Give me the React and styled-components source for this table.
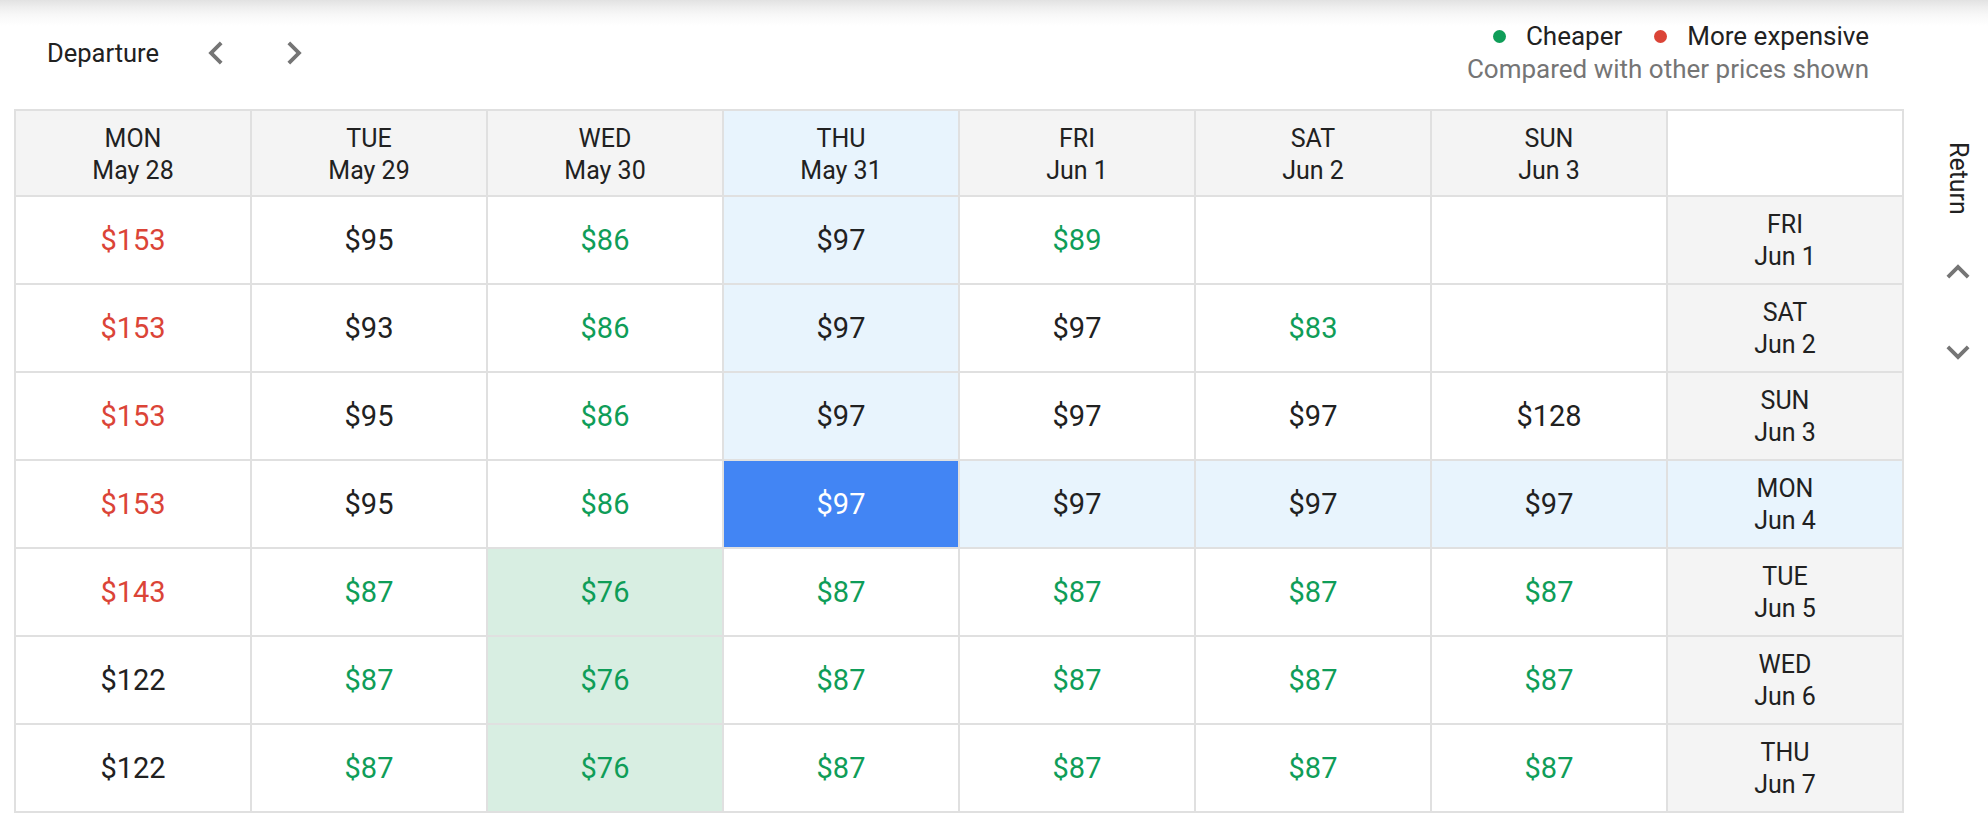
import React from 'react';
import styled, { createGlobalStyle } from 'styled-components';

const GlobalStyle = createGlobalStyle`
  html, body { margin: 0; padding: 0; background: #fff; }
  body {
    font-family: Roboto, "Liberation Sans", Arial, sans-serif;
    color: #212121;
  }
`;

const BG = {
  white: '#ffffff',
  header: '#f4f4f4',
  hl: '#e8f4fd',
  cheap: '#d8eee2',
  selected: '#4285f4',
};

const TONE = {
  r: '#db4437',
  g: '#0f9d58',
  k: '#212121',
  w: '#ffffff',
};

const Page = styled.div`
  width: 1988px;
  height: 826px;
  box-sizing: border-box;
  padding-left: 14px;
  overflow: hidden;
  background: linear-gradient(to bottom, #e2e2e2 0px, #eeeeee 7px, #f8f8f8 15px, #ffffff 26px);
`;

const TopBar = styled.div`
  height: 109px;
  box-sizing: border-box;
  padding: 0 119px 4px 33px;
  display: flex;
  align-items: center;
  justify-content: space-between;
`;

const NavGroup = styled.div`
  display: flex;
  align-items: center;
`;

const Title = styled.span`
  font-size: 25.5px;
  color: #212121;
  margin-right: 33px;
`;

const IconButton = styled.button`
  width: 48px;
  height: 48px;
  padding: 0;
  border: none;
  background: transparent;
  display: flex;
  align-items: center;
  justify-content: center;
  color: #757575;
  cursor: pointer;
  margin-right: ${(p) => p.$gap || 0}px;
`;

const Legend = styled.div`
  display: flex;
  flex-direction: column;
  align-items: flex-end;
  font-size: 26px;
  line-height: 33px;
`;

const LegendRow = styled.div`
  display: flex;
  align-items: center;
  gap: 32px;
`;

const LegendItem = styled.div`
  display: flex;
  align-items: center;
  color: #212121;
`;

const Dot = styled.span`
  width: 13px;
  height: 13px;
  border-radius: 50%;
  background: ${(p) => p.$color};
  margin-right: 20px;
`;

const Note = styled.div`
  color: #757575;
`;

const Main = styled.div`
  display: flex;
  align-items: flex-start;
`;

const Grid = styled.div`
  display: grid;
  grid-template-columns: repeat(8, 234px);
  grid-template-rows: 84px repeat(7, 86px);
  gap: 2px;
  border: 2px solid #e0e0e0;
  background: #e0e0e0;
`;

const Cell = styled.div`
  display: flex;
  flex-direction: column;
  align-items: center;
  justify-content: center;
  text-align: center;
  box-sizing: border-box;
  background: ${(p) => BG[p.$bg] || BG.white};
`;

const DateCell = styled(Cell)`
  font-size: 25px;
  line-height: 32px;
  color: #212121;
  padding-top: ${(p) => p.$pad || 1}px;
`;

const PriceCell = styled(Cell)`
  font-size: 29px;
  color: ${(p) => TONE[p.$tone] || TONE.k};
`;

const SideNav = styled.div`
  width: 84px;
  box-sizing: border-box;
  padding: 33px 0 0 24px;
  display: flex;
  flex-direction: column;
  align-items: center;
`;

const VerticalLabel = styled.span`
  writing-mode: vertical-rl;
  font-size: 25px;
  line-height: 30px;
  color: #212121;
`;

const SideButton = styled(IconButton)`
  width: 46px;
  height: 46px;
  margin-top: ${(p) => p.$top}px;
`;

const Icon = ({ d, size = 46 }) => (
  <svg width={size} height={size} viewBox="0 0 24 24" fill="currentColor">
    <path d={d} />
  </svg>
);

const P_LEFT = 'M15.41 7.41L14 6l-6 6 6 6 1.41-1.41L10.83 12z';
const P_RIGHT = 'M10 6L8.59 7.41 13.17 12l-4.58 4.59L10 18l6-6z';
const P_UP = 'M12 8l-6 6 1.41 1.41L12 10.83l4.59 4.58L18 14z';
const P_DOWN = 'M16.59 8.59L12 13.17 7.41 8.59 6 10l6 6 6-6z';

const departures = [
  ['MON', 'May 28'],
  ['TUE', 'May 29'],
  ['WED', 'May 30'],
  ['THU', 'May 31'],
  ['FRI', 'Jun 1'],
  ['SAT', 'Jun 2'],
  ['SUN', 'Jun 3'],
];

const returns = [
  ['FRI', 'Jun 1'],
  ['SAT', 'Jun 2'],
  ['SUN', 'Jun 3'],
  ['MON', 'Jun 4'],
  ['TUE', 'Jun 5'],
  ['WED', 'Jun 6'],
  ['THU', 'Jun 7'],
];

// [price, tone]
const prices = [
  [['$153', 'r'], ['$95', 'k'], ['$86', 'g'], ['$97', 'k'], ['$89', 'g'], null, null],
  [['$153', 'r'], ['$93', 'k'], ['$86', 'g'], ['$97', 'k'], ['$97', 'k'], ['$83', 'g'], null],
  [['$153', 'r'], ['$95', 'k'], ['$86', 'g'], ['$97', 'k'], ['$97', 'k'], ['$97', 'k'], ['$128', 'k']],
  [['$153', 'r'], ['$95', 'k'], ['$86', 'g'], ['$97', 'k'], ['$97', 'k'], ['$97', 'k'], ['$97', 'k']],
  [['$143', 'r'], ['$87', 'g'], ['$76', 'g'], ['$87', 'g'], ['$87', 'g'], ['$87', 'g'], ['$87', 'g']],
  [['$122', 'k'], ['$87', 'g'], ['$76', 'g'], ['$87', 'g'], ['$87', 'g'], ['$87', 'g'], ['$87', 'g']],
  [['$122', 'k'], ['$87', 'g'], ['$76', 'g'], ['$87', 'g'], ['$87', 'g'], ['$87', 'g'], ['$87', 'g']],
];

const SEL_ROW = 3;
const SEL_COL = 3;
const CHEAPEST_COL = 2;

function cellBg(r, c) {
  if (r === SEL_ROW && c === SEL_COL) return 'selected';
  if (c === SEL_COL && r < SEL_ROW) return 'hl';
  if (r === SEL_ROW && c > SEL_COL) return 'hl';
  if (c === CHEAPEST_COL && r > SEL_ROW) return 'cheap';
  return 'white';
}

export default function App() {
  return (
    <>
      <GlobalStyle />
      <Page>
        <TopBar>
          <NavGroup>
            <Title>Departure</Title>
            <IconButton $gap={30} aria-label="Previous">
              <Icon d={P_LEFT} />
            </IconButton>
            <IconButton aria-label="Next">
              <Icon d={P_RIGHT} />
            </IconButton>
          </NavGroup>
          <Legend>
            <LegendRow>
              <LegendItem>
                <Dot $color={TONE.g} />
                Cheaper
              </LegendItem>
              <LegendItem>
                <Dot $color={TONE.r} />
                More expensive
              </LegendItem>
            </LegendRow>
            <Note>Compared with other prices shown</Note>
          </Legend>
        </TopBar>
        <Main>
          <Grid>
            {departures.map(([d, date], c) => (
              <DateCell key={'h' + c} $pad={4} $bg={c === SEL_COL ? 'hl' : 'header'}>
                <span>{d}</span>
                <span>{date}</span>
              </DateCell>
            ))}
            <DateCell $bg="white" />
            {returns.map(([d, date], r) => (
              <React.Fragment key={'r' + r}>
                {prices[r].map((p, c) => {
                  const bg = cellBg(r, c);
                  return (
                    <PriceCell key={c} $bg={bg} $tone={bg === 'selected' ? 'w' : p ? p[1] : 'k'}>
                      {p ? p[0] : ''}
                    </PriceCell>
                  );
                })}
                <DateCell $bg={r === SEL_ROW ? 'hl' : 'header'}>
                  <span>{d}</span>
                  <span>{date}</span>
                </DateCell>
              </React.Fragment>
            ))}
          </Grid>
          <SideNav>
            <VerticalLabel>Return</VerticalLabel>
            <SideButton $top={34} aria-label="Earlier return">
              <Icon d={P_UP} />
            </SideButton>
            <SideButton $top={34} aria-label="Later return">
              <Icon d={P_DOWN} />
            </SideButton>
          </SideNav>
        </Main>
      </Page>
    </>
  );
}
